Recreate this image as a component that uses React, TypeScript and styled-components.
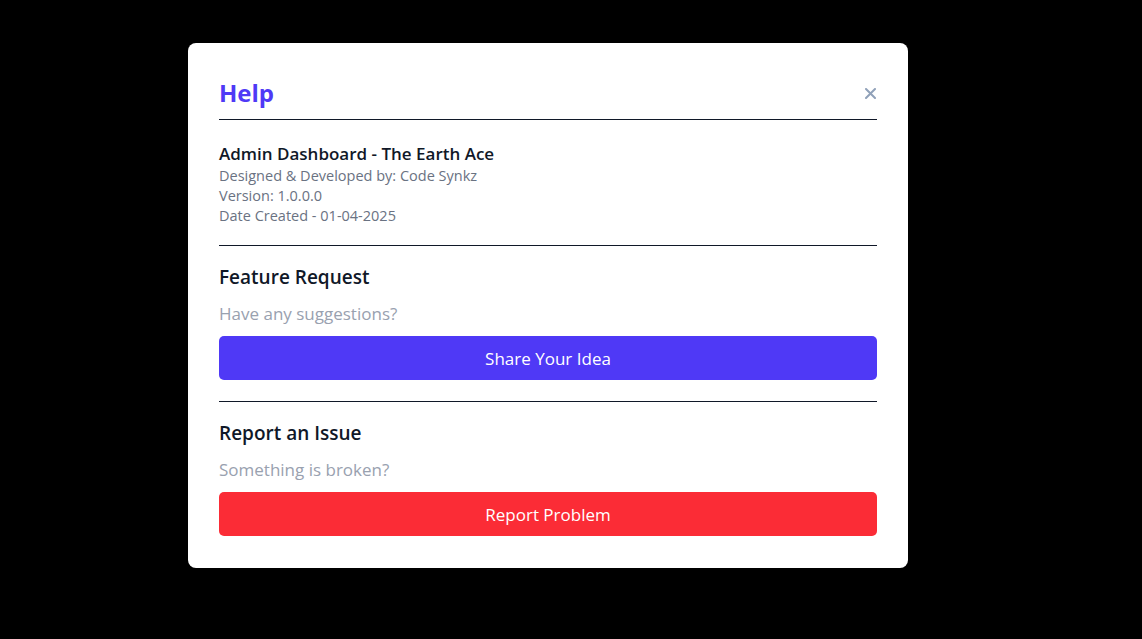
import React from "react";
import styled, { createGlobalStyle } from "styled-components";

const Global = createGlobalStyle`
  html, body { margin: 0; padding: 0; background: #000; }
  body { font-family: "Open Sans", "Noto Sans", Arial, sans-serif; }
  * { box-sizing: border-box; }
`;

const Backdrop = styled.div`
  width: 1142px;
  height: 639px;
  background: #000;
  display: flex;
  justify-content: flex-start;
  align-items: flex-start;
  padding: 43px 0 0 188px;
`;

const Modal = styled.div`
  width: 720px;
  background: #fff;
  border-radius: 8px;
  padding: 31px 31px 32px;
  display: flex;
  flex-direction: column;
`;

const Header = styled.div`
  display: flex;
  align-items: center;
  justify-content: space-between;
  height: 46px;
  border-bottom: 1px solid #101828;
  padding-bottom: 7px;
`;

const Title = styled.h2`
  margin: 0;
  font-size: 24px;
  line-height: 36px;
  font-weight: 700;
  color: #4f39f6;
`;

const CloseButton = styled.button`
  border: 0;
  background: transparent;
  padding: 0;
  width: 16px;
  height: 16px;
  display: flex;
  align-items: center;
  justify-content: center;
  color: #90a1b9;
  cursor: pointer;
  margin-right: -1px;
`;

const Section = styled.section<{ $divider?: boolean; $first?: boolean; $last?: boolean }>`
  display: flex;
  flex-direction: column;
  padding-top: ${(p) => (p.$first ? "21px" : "17px")};
  padding-bottom: ${(p) => (p.$last ? "0" : p.$first ? "19px" : "21px")};
  border-bottom: ${(p) => (p.$divider ? "1px solid #101828" : "0")};
`;

const AppName = styled.div`
  font-size: 17px;
  line-height: 25px;
  font-weight: 600;
  color: #101828;
`;

const Meta = styled.div`
  font-size: 14.5px;
  line-height: 20px;
  color: #6a7282;
`;

const SectionTitle = styled.h3`
  margin: 0;
  font-size: 19px;
  line-height: 28px;
  font-weight: 600;
  color: #101828;
`;

const Hint = styled.p`
  margin: 9px 0 8px;
  font-size: 17px;
  line-height: 28px;
  color: #99a1af;
`;

const ActionButton = styled.button<{ $tone: "primary" | "danger" }>`
  width: 100%;
  height: 44px;
  border: 0;
  border-radius: 5px;
  background: ${(p) => (p.$tone === "primary" ? "#4f39f6" : "#fb2c36")};
  color: #fff;
  font-family: inherit;
  font-size: 17px;
  cursor: pointer;
`;

export default function App() {
  return (
    <>
      <Global />
      <Backdrop>
        <Modal>
          <Header>
            <Title>Help</Title>
            <CloseButton aria-label="Close">
              <svg width="11" height="11" viewBox="0 0 11 11">
                <path d="M1 1L10 10M10 1L1 10" stroke="currentColor" strokeWidth="2" strokeLinecap="round" />
              </svg>
            </CloseButton>
          </Header>
          <Section $first $divider>
            <AppName>Admin Dashboard - The Earth Ace</AppName>
            <Meta>Designed &amp; Developed by: Code Synkz</Meta>
            <Meta>Version: 1.0.0.0</Meta>
            <Meta>Date Created - 01-04-2025</Meta>
          </Section>
          <Section $divider>
            <SectionTitle>Feature Request</SectionTitle>
            <Hint>Have any suggestions?</Hint>
            <ActionButton $tone="primary">Share Your Idea</ActionButton>
          </Section>
          <Section $last>
            <SectionTitle>Report an Issue</SectionTitle>
            <Hint>Something is broken?</Hint>
            <ActionButton $tone="danger">Report Problem</ActionButton>
          </Section>
        </Modal>
      </Backdrop>
    </>
  );
}
